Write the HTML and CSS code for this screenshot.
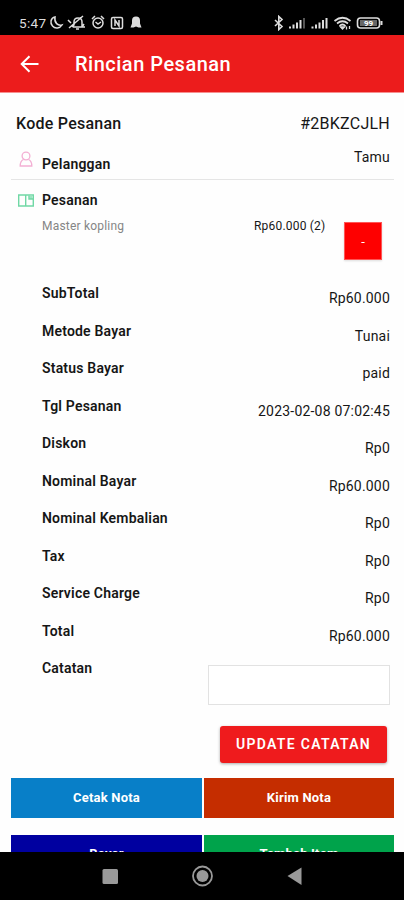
FILE: index.html
```html
<!DOCTYPE html>
<html lang="id">
<head>
<meta charset="utf-8">
<title>Rincian Pesanan</title>
<link rel="stylesheet" href="styles.css">
</head>
<body>
<div class="screen">
  <div class="status">
    <span class="clock">5:47</span>
    <svg class="left-icons" width="94" height="16" viewBox="0 0 94 16" fill="none" stroke="#ddd" stroke-width="1.5">
      <path d="M6 2C1.500 3 .8 8 3.500 11C6 14 11 13.500 13 10C9 11 5 8 6 2Z"/>
      <path d="M24 12h9V7q0-4-4-4q-4 0-4 4v3l-2 2M27 14h3M34 1L20 13M19 5l3 3M35 9l-2 3h3"/>
      <circle cx="49" cy="8" r="5"/><path d="M46.500 7l2.500 2l3-2M43 4l3-3M52 1l3 3"/>
      <rect x="62.500" y="2.500" width="11" height="11" rx="1.500"/><path d="M66 11V5l4 6V5"/>
      <path d="M83 5.500a4 4 0 0 1 8 0v3l1.500 4h-3l-2.500-1l-2.500 1h-3l1.500-4z" fill="#ddd" stroke="none"/>
    </svg>
    <svg class="right-icons" width="112" height="16" viewBox="0 0 112 16" fill="none" stroke="#ddd" stroke-width="1.300">
      <path d="M3 5l7 6.500L6.800 14.500V1.500L10 4.500L3 11" stroke-width="1.600"/>
      <g stroke-width="2"><path d="M18 13.500v-2M21.500 13.500v-4M25 13.500V7.500M28.500 13.500V5"/><path d="M32 13.500V3" stroke="#555"/><path d="M40.500 13.500v-2M44 13.500v-4M47.500 13.500V7.500M51 13.500V5M54.500 13.500V3"/></g>
      <path d="M62.500 6q8-6.500 16 0M65 8.500q5.500-4.500 11 0M67.500 11q3-3 6 0" stroke-width="1.700"/><path d="M68.500 12h4l-2 2zM74.500 11.500v3M77.500 11v3" fill="#ddd"/>
      <rect x="85.500" y="3" width="22" height="10" rx="3" stroke-width="1.600"/><path d="M109.500 6v4" stroke-width="2"/><path d="M88 5h17v6H88z" fill="#666" stroke="none"/>
      <text x="92" y="11" class="battery">99</text>
    </svg>
  </div>
  <header class="bar">
    <svg class="back" width="20" height="18" viewBox="0 0 20 18" fill="none" stroke="#fff" stroke-width="2"><path d="M18.500 9H2M9.500 1.200L1.700 9l7.800 7.800"/></svg>
    <h1>Rincian Pesanan</h1>
  </header>
  <main>
    <div class="code"><b>Kode Pesanan</b><span>#2BKZCJLH</span></div>
    <div class="customer">
      <svg width="14" height="17" viewBox="0 0 14 17" fill="none" stroke="#f3afd3" stroke-width="1.300"><circle cx="7" cy="5" r="3.900"/><path d="M4.500 8.500Q1.200 10 1.200 15h11.600Q12.800 10 9.500 8.500"/></svg>
      <b>Pelanggan</b><span>Tamu</span>
    </div>
    <div class="order">
      <svg width="16" height="13" viewBox="0 0 16 13" fill="none" stroke="#70d8a5" stroke-width="1.400"><path d="M.7 1h14.600v11H.7zM7.700 1v11"/><path d="M8.400 1.700h3V5h3.200v-3.300" stroke="none" fill="#9ce6c2"/><path d="M11 1.500V5h4"/></svg>
      <b>Pesanan</b>
    </div>
    <div class="item"><span class="name">Master kopling</span><span class="price">Rp60.000 (2)</span><button class="minus">-</button></div>
    <dl>
      <div><dt>SubTotal</dt><dd>Rp60.000</dd></div>
      <div><dt>Metode Bayar</dt><dd>Tunai</dd></div>
      <div><dt>Status Bayar</dt><dd>paid</dd></div>
      <div><dt>Tgl Pesanan</dt><dd>2023-02-08 07:02:45</dd></div>
      <div><dt>Diskon</dt><dd>Rp0</dd></div>
      <div><dt>Nominal Bayar</dt><dd>Rp60.000</dd></div>
      <div><dt>Nominal Kembalian</dt><dd>Rp0</dd></div>
      <div><dt>Tax</dt><dd>Rp0</dd></div>
      <div><dt>Service Charge</dt><dd>Rp0</dd></div>
      <div><dt>Total</dt><dd>Rp60.000</dd></div>
    </dl>
    <div class="note"><label for="note">Catatan</label><input id="note"></div>
    <button class="update">UPDATE CATATAN</button>
    <div class="actions">
      <button class="print">Cetak Nota</button><button class="send">Kirim Nota</button>
      <button class="pay">Bayar</button><button class="add">Tambah Item</button>
    </div>
  </main>
  <nav>
    <svg width="404" height="48" viewBox="0 0 404 48"><rect x="102.500" y="17" width="15.500" height="15" rx="1.500" fill="#999"/><circle cx="202.500" cy="24" r="9.500" fill="none" stroke="#999" stroke-width="1.800"/><circle cx="202.500" cy="24" r="6" fill="#999"/><path d="M287.500 24L301.500 15.500V33Z" fill="#999"/></svg>
  </nav>
</div>
</body>
</html>
```
FILE: styles.css
```css
* { box-sizing: border-box; }
body { margin: 0; background: #fefefe; font-family: Roboto, sans-serif; color: #161616; }
.screen { display: flex; flex-direction: column; width: 404px; height: 900px; overflow: hidden; }
.status { display: flex; flex: none; align-items: center; height: 35px; padding: 11px 20px 0 19px; background: #000; color: #ddd; }
.clock { width: 30px; font-size: 13.500px; letter-spacing: .35px; line-height: 16px; }
.right-icons { margin-left: auto; }
.battery { font-size: 8px; font-weight: 700; fill: #fff; stroke: none; }
.bar { display: flex; flex: none; align-items: center; height: 58px; padding-left: 20px; background: #ec1c1c; border-bottom: 1px solid #f78f8f; color: #fff; }
h1 { margin: 0 0 0 35px; font-size: 20px; font-weight: 500; letter-spacing: .5px; line-height: 24px; }
main { flex: 1; min-height: 0; overflow: hidden; padding: 0 10px 0 11px; }
b, dt, label { font-weight: 600; }
.code { display: flex; justify-content: space-between; padding: 21px 4px 0 5px; height: 51px; font-size: 16px; letter-spacing: .25px; line-height: 20px; }
.code b { font-weight: 500; }
.customer { display: flex; height: 36px; padding: 0 4px 0 8px; border-bottom: 1px solid #e5e5e5; font-size: 14px; letter-spacing: .2px; line-height: 18px; }
.customer svg { margin: 7px 9px 0 0; }
.customer b { margin-top: 11px; }
.customer span { margin: 4px 0 0 auto; }
.order { display: flex; align-items: center; height: 40px; padding-left: 7px; font-size: 14px; letter-spacing: .2px; }
.order b { margin-left: 8px; }
.item { display: flex; height: 59px; padding-left: 31px; font-size: 12px; letter-spacing: .2px; line-height: 12px; }
.name { color: #858585; }
.price { width: 90px; margin-left: auto; }
button { display: block; padding: 0; border: 0; font-family: inherit; color: #fff; }
.minus { width: 38px; height: 38px; margin: 2px 12px 0 0; background: #fe0000; border: 1px solid #ff5555; font-size: 13px; box-shadow: 0 1px 2px #ddd; }
dl { margin: 0; padding: 0 4px 0 31px; font-size: 14px; letter-spacing: .2px; line-height: 18px; }
dl div { display: flex; justify-content: space-between; height: 37.500px; }
dt { padding-top: 5px; }
dd { margin: 0; padding-top: 10px; letter-spacing: .2px; }
.note { display: flex; justify-content: space-between; height: 53px; padding: 5px 4px 0 31px; font-size: 14px; letter-spacing: .2px; line-height: 18px; }
.note input { width: 182px; height: 40px; margin-top: 6px; background: #fff; border: 1px solid #e2e2e2; }
.update { width: 167px; height: 37px; margin: 19px 7px 0 auto; padding-bottom: 2px; border-radius: 3px; background: #ef1b1d; box-shadow: 0 1px 3px #aaa; font-size: 14px; font-weight: 600; letter-spacing: 1.300px; }
.actions { display: grid; grid-template-columns: 191px 190px; gap: 17px 2px; margin-top: 15px; }
.actions button { height: 40px; padding-bottom: 1px; font-size: 13px; font-weight: 700; letter-spacing: .2px; }
.print { background: #087fc8; }
.send { background: #c52d00; }
.pay { background: #0000a0; }
.add { background: #00a34b; }
.actions .pay, .actions .add { padding-bottom: 3px; }
nav { flex: none; height: 48px; background: #000; }
nav svg { display: block; }
```
